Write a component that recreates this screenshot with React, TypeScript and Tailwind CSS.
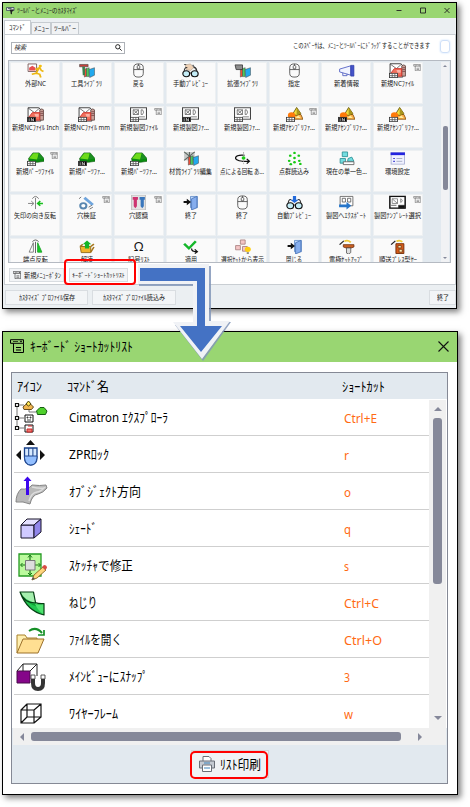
import React, { useLayoutEffect, useRef, useState } from "react";

/* Text condensed or stretched horizontally to a given width. */
function T({ w, children, className = "" }: { w: number; children: string; className?: string }) {
  const ref = useRef<HTMLSpanElement>(null);
  const [s, setS] = useState(1);
  useLayoutEffect(() => {
    if (ref.current && ref.current.offsetWidth) setS(w / ref.current.getBoundingClientRect().width * s);
  }, [w, children]);
  return (
    <span className={"block shrink-0 whitespace-pre " + className} style={{ width: w }}>
      <span ref={ref} className="inline-block origin-left" style={{ transform: `scaleX(${s})` }}>
        {children}
      </span>
    </span>
  );
}

function MenuMark({ className = "" }: { className?: string }) {
  return (
    <svg viewBox="0 0 14 14" className={className} fill="none" stroke="currentColor">
      <path d="M.5.7h13v3.6H.5zM3.5 4.3v9.2h10V4.3M6 8.5h5M6 11h5" />
      <path d="M3 2.5h5" strokeWidth=".7" />
      <path d="M9.5 1.8h3l-1.5 1.7z" fill="currentColor" stroke="none" />
    </svg>
  );
}

const Mouse = () => (
  <g fill="none" stroke="#555" strokeWidth=".9">
    <rect x="3.5" y="1" width="9" height="14" rx="4" />
    <path d="M3.5 7h9M8 1v2M8 6v1" />
    <rect x="6.8" y="2.7" width="2.4" height="3.8" rx="1" />
  </g>
);
const Tag = ({ dark }: { dark?: boolean }) => (
  <g>
    <rect x=".4" y="11" width="7.6" height="4.6" fill={dark ? "#000" : "#fff"} stroke="#333" strokeWidth=".8" />
    {dark ? <path d="M2 12v3M4 15v-3l2 3v-3" stroke="#fff" strokeWidth=".7" fill="none" /> : <path d="M0 13.5h8M3 11v5M5.5 11v5" stroke="#555" strokeWidth=".8" />}
  </g>
);
const Nc = ({ dark }: { dark?: boolean }) => (
  <g>
    <path d="M1 .8h10l2 2V15H1z" fill="#fff" stroke="#333" strokeWidth=".9" />
    <path d="M1 1l6 5 5-5" fill="none" stroke="#555" strokeWidth=".8" />
    <path d="M12 3q2-2 3.5 0v11H12z" fill="#c9a098" stroke="#5c4540" strokeWidth=".8" />
    <path d="M1 12l4-6h7v8H7z" fill="#f0705c" stroke="#d02c26" strokeWidth=".9" />
    <path d="M7 7.500h4v3H8z" fill="#fbb3a6" />
    <path d="M12.5 5h3M12.5 7h3M12.5 9h3" stroke="#744" strokeWidth=".8" />
    <Tag dark={dark} />
  </g>
);
const Drawing = ({ dark }: { dark?: boolean }) => (
  <g>
    <rect x=".5" y=".8" width="15" height="12.2" fill="#fff" stroke="#444" />
    <path d="M3 3h5v5H3zM3 3l5 5M8 3L3 8M10.5 3v5h1.3q2-2.5 0-5zM8 10.5h6" fill="none" stroke="#666" strokeWidth=".8" />
    <Tag dark={dark} />
  </g>
);
const Assembly = ({ dark }: { dark?: boolean }) => (
  <g>
    <path d="M8 13l-1-5h7l2 5z" fill="#ffb04a" stroke="#7d4500" strokeWidth=".8" />
    <path d="M6 8l4-7.5L14 7l-4 2z" fill="#f3dd3a" stroke="#554700" strokeWidth=".8" />
    <path d="M10 .5L14 7l-4 2z" fill="#a9951c" />
    <circle cx="5.2" cy="9" r="3.4" fill="#ff7a0a" />
    <path d="M9 11.5l2.5-2.5 2.500 3z" fill="#fff0a0" />
    <Tag dark={dark} />
  </g>
);
const Part = ({ dark }: { dark?: boolean }) => (
  <g>
    <path d="M1.5 8l4-6h6l4.5 6v3l-6 1H2z" fill="#0a8d10" stroke="#0a5a0c" strokeWidth=".6" />
    <path d="M2 8l4-5.5h5L9.5 9z" fill="#6edb1c" />
    <path d="M11.5 2.5l4 5.500-5.500 1z" fill="#1e8f22" />
    <Tag dark={dark} />
  </g>
);
const Books = () => (
  <g strokeWidth=".5" stroke="#444">
    <path d="M6 7l2-1.5v8.5l-2 1z" fill="#ef4e36" />
    <path d="M8 6l2.5-1v9.5H8z" fill="#4bc95c" />
    <path d="M10.5 7L15.5 5v8l-4.5 2.5z" fill="#22a9ee" />
  </g>
);
const Door = () => (
  <g>
    <path d="M8 1.5h6.5v12H8z" fill="#c4dcff" stroke="#5b86c4" strokeWidth=".8" />
    <path d="M9 4l5-2.5v12L9 16z" fill="#86aeee" stroke="#4671b5" strokeWidth=".8" />
    <path d="M1.5 6.5h3V4L8.5 7.5 4.5 11V8.5h-3z" fill="#111" />
  </g>
);
const Glasses = () => (
  <g>
    <path d="M2 10Q2 4 5 5M14 10q0-6-3-5" fill="none" stroke="#333" />
    <circle cx="4" cy="11.5" r="3.2" fill="#c4edf7" stroke="#111" strokeWidth="1.1" />
    <circle cx="12" cy="11.5" r="3.2" fill="#c4edf7" stroke="#111" strokeWidth="1.1" />
    <path d="M7 11q1-1 2 0" stroke="#111" fill="none" />
  </g>
);

function Icon({ k }: { k: string }) {
  let g: React.ReactNode = null;
  const dark = k.endsWith("!");
  switch (k.replace("!", "")) {
    case "extnc":
      g = <g><path d="M1 1h8v8H1z" fill="#fff" stroke="#644" strokeWidth=".8" /><path d="M2 8V5l3-2 3 2v3z" fill="#e84f4f" /><path d="M8 7l4-2 1.5 3 2 1M11 6l-2.5 5-4 1M9 11l3 1 1 3.5" fill="none" stroke="#edb713" strokeWidth="1.7" /><circle cx="12.5" cy="3.3" r="1.5" fill="#f4bf11" /></g>; break;
    case "lib": g = <g><Books /><path d="M1.5 1.5h8V4h-8z" fill="#c9403a" stroke="#444" strokeWidth=".6" /><path d="M4 4h2.5v9h-2z" fill="#3b7f4b" /></g>; break;
    case "mouse": g = <Mouse />; break;
    case "preview": g = <g><path d="M3 2l5-1 3 4-3 3-4-1z" fill="#eed1b5" stroke="#a98" strokeWidth=".6" /><path d="M2 1.5h2M10 2l4 6" stroke="#555" strokeWidth="1.1" /><Glasses /></g>; break;
    case "extlib": g = <g><Books /><path d="M1 2h7v5H2z" fill="#8d8d8d" stroke="#333" strokeWidth=".8" /></g>; break;
    case "horn": g = <g><path d="M1.5 6.5L12 3v10L1.5 9.5z" fill="#f1f4ff" stroke="#5663c4" strokeWidth=".9" /><path d="M12 2.5h3V14h-3z" fill="#4553c9" stroke="#2735a0" strokeWidth=".6" /><path d="M4.5 10.5v3h4v-2" fill="none" stroke="#5663c4" strokeWidth=".9" /></g>; break;
    case "nc": g = <Nc dark={dark} />; break;
    case "draw": g = <Drawing dark={dark} />; break;
    case "asm": g = <Assembly dark={dark} />; break;
    case "part": g = <Part dark={dark} />; break;
    case "material": g = <g><path d="M2 1h10v9H2z" fill="#c5c9c7" /><path d="M2 1l10 9M12 1L2 10M7 1v9" stroke="#5b655f" /><Books /></g>; break;
    case "rotate": g = <g><path d="M10 4.5C0 3.5-2 10 8 11h6M12 8.5l2.5 2.5-2.5 2.5" fill="none" stroke="#111" strokeWidth="1.2" /><path d="M9 1v13" stroke="#999" strokeDasharray="2 1" strokeWidth=".8" /><circle cx="9" cy="7.5" r="1.8" fill="#1dcc18" /></g>; break;
    case "dots": g = <g fill="#17c914">{[[8, 2], [4, 5], [12, 5], [8, 7.5], [3, 10.5], [12.5, 10.5], [8, 12], [4.5, 14], [13.5, 13.8]].map(([x, y]) => <circle key={`${x}-${y}`} cx={x} cy={y} r="1.25" />)}</g>; break;
    case "color": g = <g fill="#73dde0" stroke="#278b91" strokeWidth=".8"><path d="M4 1h5v5H4zM2 8h5v5H2zM9.5 8L13 6.500l2 4.500H9z" /><path d="M5 11.5h10v3H5z" fill="#fff" stroke="#555" /></g>; break;
    case "settings": g = <g><rect x="2" y="1.5" width="12.5" height="12.5" fill="#f0f2ff" stroke="#a4abd0" strokeWidth=".8" /><path d="M1.5 3H15" stroke="#2424df" strokeWidth="2.8" /><path d="M7 8h5.5M7 11h5.5" stroke="#a1a7c0" strokeWidth=".9" /><path d="M4 8h1.5M4 11h1.5" stroke="#3434cf" strokeWidth="1.3" /></g>; break;
    case "flip": g = <g><path d="M8 3v12M5 4q3-5 6 0M1 9h5M4 6.5L6.5 9 4 11.5" fill="none" stroke="#777" strokeWidth=".9" /><path d="M15 9h-5M12.5 6.5L10 9l2.5 2.5" stroke="#17bf1c" strokeWidth="1.5" fill="none" /></g>; break;
    case "hole": g = <g><path d="M6 3l8 7.5" stroke="#6fa5dd" strokeWidth="2.8" /><circle cx="5" cy="11.5" r="2.9" fill="#fff" stroke="#5a87b0" strokeWidth="1.9" /><path d="M1 4l2-2M10 13l3-2M11 15l3-2" stroke="#555" strokeWidth=".8" /></g>; break;
    case "holerec": g = <g><path d="M1.5 0h13v16h-13z" fill="#e3e3e3" stroke="#b4b4b4" strokeWidth=".8" /><path d="M2.5 2h5v3h-1v7L5 14l-1.5-2V5h-1z" fill="#cd3470" /><path d="M9 2h5v3h-1v7l-1.500 2-1.500-2V5H9z" fill="#3976bc" /></g>; break;
    case "door": g = <Door />; break;
    case "auto": g = <g><Glasses /><path d="M6.5 1h3v4H12L8 8.500 4 5h2.500z" fill="#236bdb" /></g>; break;
    case "export": g = <g><path d="M2 1.5h12v10H2z" fill="#fff" stroke="#555" strokeWidth=".8" /><path d="M4 3.5h3v4H4zM9 3.5h3v4H9z" fill="none" stroke="#555" strokeWidth=".8" /><path d="M1 10h7V7.5l4.5 4-4.5 4V13H1z" fill="#2776ca" /></g>; break;
    case "template": g = <g><rect x=".8" y="1.5" width="14.4" height="12.5" fill="#fff" stroke="#111" strokeWidth="1.4" /><path d="M3 4h5v5H3zM3 4l5 5M11 4v4q3-2 0-4" stroke="#777" fill="none" strokeWidth=".8" /><path d="M9 11h6v3H9zM2 11h5" fill="#111" stroke="#333" strokeWidth=".7" /></g>; break;
    case "mirror": g = <g><path d="M6 4L2 14h4z" fill="#fff" stroke="#777" strokeWidth=".9" /><path d="M10 4v10h4z" fill="#15cc25" stroke="#20a52b" strokeWidth=".9" /><path d="M8 3v12M5 3q3-4 6 0" stroke="#555" fill="none" strokeWidth=".9" /></g>; break;
    case "unzip": g = <g><path d="M2 8h10v6.5H3z" fill="#f2b52a" stroke="#825a08" strokeWidth=".8" /><path d="M2 8l2.5-2.5M12 8l3-2.500M12 14l3-5.500" stroke="#a5761c" strokeWidth="1.5" /><path d="M6.5 10V5.5h-2l4-4 4 4h-2V10z" fill="#15b526" /></g>; break;
    case "apply": g = <g fill="none"><path d="M2 5l4.5 5L13 2.5" stroke="#14b72a" strokeWidth="2.4" /><path d="M9 10q0 3.5 5 3.5M12 11l2.5 2.5-2.5 2" stroke="#111" strokeWidth="1.2" /></g>; break;
    case "set": g = <g><path d="M6 1h4.500v4.500H6zM1.500 7H6v4.500H1.500zM8 8h4.500v5H8z" fill="#f4c6c6" stroke="#a57b7b" strokeWidth=".8" /><circle cx="13" cy="11" r="2.8" fill="#ffcf12" /><path d="M12 14h2v2h-2z" fill="#888" /></g>; break;
    case "electrode": g = <g><path d="M1.5 6l4-4" stroke="#222" strokeWidth="1.2" /><path d="M5 6h10v2.500l-2.500 1h-5L5 8.500z" fill="#c96024" stroke="#713112" strokeWidth=".8" /><path d="M8 9.500h4v5L10 16l-2-1z" fill="#ddd" stroke="#555" strokeWidth=".8" /><path d="M6 2.500q3-2 6 1" fill="none" stroke="#efc935" strokeWidth="1.8" /></g>; break;
    case "press": g = <g><path d="M2 6l4-4" stroke="#222" strokeWidth="1.2" /><path d="M6.500 5H14v10.500H6.500z" fill="#d65b18" stroke="#6f2b08" strokeWidth=".9" /><path d="M8.500 7h3v2.500h-3zM9.500 11h3v3h-3z" fill="#fff0be" stroke="#74320b" strokeWidth=".8" /><path d="M7 2.500q3-2 5.500.5" fill="none" stroke="#eecb35" strokeWidth="1.8" /></g>; break;
  }
  return <svg viewBox="0 0 16 16" className="h-[15px] w-[17px] shrink-0" preserveAspectRatio="none">{g}</svg>;
}

type Cell = [string, string, number, boolean?];
const cells: Cell[] = [
  ["extnc", "外部NC", 21], ["lib", "工具ﾗｲﾌﾞﾗﾘ", 31], ["mouse", "戻る", 11], ["preview", "手動ﾌﾟﾚﾋﾞｭｰ", 35],
  ["extlib", "拡張ﾗｲﾌﾞﾗﾘ", 31], ["mouse", "指定", 12], ["horn", "新着情報", 25], ["nc", "新規NCﾌｧｲﾙ", 33, true],
  ["nc!", "新規NCﾌｧｲﾙ Inch", 47], ["nc", "新規NCﾌｧｲﾙ mm", 46], ["draw", "新規製図ﾌｧｲﾙ", 38, true], ["draw!", "新規製図ﾌｧ...", 36],
  ["draw", "新規製図ﾌｧ...", 36], ["asm", "新規ｱｾﾝﾌﾞﾘﾌｧ...", 42, true], ["asm!", "新規ｱｾﾝﾌﾞﾘﾌｧ...", 42], ["asm", "新規ｱｾﾝﾌﾞﾘﾌｧ...", 42],
  ["part", "新規ﾊﾟｰﾂﾌｧｲﾙ", 38, true], ["part!", "新規ﾊﾟｰﾂﾌｧ...", 36], ["part", "新規ﾊﾟｰﾂﾌｧ...", 36], ["material", "材質ﾗｲﾌﾞﾗﾘ編集", 43],
  ["rotate", "点による回転 あ...", 44], ["dots", "点群読込み", 30], ["color", "現在の単一色...", 41], ["settings", "環境設定", 25],
  ["flip", "矢印の向き反転", 42], ["hole", "穴検証", 19, true], ["holerec", "穴認識", 19, true], ["door", "終了", 12],
  ["mouse", "終了", 12], ["auto", "自動ﾌﾟﾚﾋﾞｭｰ", 34], ["export", "製図へｴｸｽﾎﾟｰﾄ", 40], ["template", "製図ﾃﾝﾌﾟﾚｰﾄ選択", 47, true],
  ["mirror", "端点反転", 25], ["unzip", "解凍", 12], ["omega", "記号ﾘｽﾄ", 22], ["apply", "適用", 12],
  ["set", "選択ｾｯﾄから表示", 43], ["door", "閉じる", 16], ["electrode", "電極ｾｯﾄｱｯﾌﾟ", 34], ["press", "順送ﾌﾟﾚｽ型ｾｰ", 38],
];

function RowIcon({ n }: { n: number }) {
  const art = [
    <g key="0"><path d="M3 5v25M3 5h7M3 18h7M3 28h7M15 9v3h7" fill="none" stroke="#777" /><path d="M1.500 3.500h3v3h-3zM1.500 16.500h3v3h-3zM1.500 26.500h3v3h-3z" fill="#fff" stroke="#111" strokeWidth="1.200" /><path d="M9 7l5.500-5 5 5-2 2.500H10z" fill="#efb54f" stroke="#684b19" /><path d="M12 4l2.500-3L17 4l-2.500 2z" fill="#ffe757" stroke="#4d420a" /><path d="M22.500 11L26 7.500h4l3 3.500-1.500 3.500h-8z" fill="#4fd12c" stroke="#155d12" /><path d="M11 15h8v7h-8zM11 25h8v7h-8z" fill="#fff" stroke="#111" /><path d="M13 17h1v1h-1zM16 17h1v1h-1zM13 20h4" stroke="#444" /><path d="M13 29h5v3h-5zM14 26h4" stroke="#c92626" fill="#ef7770" /></g>,
    <g key="1"><path d="M16.500 3L21 8h-9zM2 18l5-5v10zM31 18l-5-5v10z" fill="#111" /><path d="M10.500 11H23v9q0 8-6.200 8t-6.300-8z" fill="#d8eaff" stroke="#17408a" strokeWidth="1.300" /><path d="M10.500 19H23v2q-1 7-6.200 7t-6.300-7z" fill="#93bfff" stroke="#244b94" /><path d="M14.700 11v8M18.900 11v8" stroke="#17408a" /></g>,
    <g key="2"><path d="M7 15q7 1 11-4 8 1 14 0l1 3q-4 5-9 6-6 1-8 10-7-3-14-2 0-8 5-13z" fill="#b9b9b9" stroke="#858585" /><path d="M18 13q8 2 12 1-4 4-7 4-6 1-8 9" fill="none" stroke="#ddd" strokeWidth="1.500" /><path d="M13.500 21V5" stroke="#3d08ed" strokeWidth="3" /><path d="M13.500 2.500L9.500 7h8z" fill="#3d08ed" /></g>,
    <g key="3" stroke="#171329"><path d="M7 14h13v13H7z" fill="#d0caff" /><path d="M7 14l6-6h14l-7 6z" fill="#e5e1ff" /><path d="M20 14l7-6v13l-7 6z" fill="#9186ea" /></g>,
    <g key="4"><path d="M5 6h22v22H5z" fill="#bbfa9d" stroke="#259a22" strokeWidth="1.300" /><path d="M16 8v19M7 17h19" stroke="#167813" strokeWidth="1.200" /><path d="M14 9.500L16 7l2 2.500M14 25l2 2 2-2M8.500 15l-2 2 2 2M24.500 15l2 2-2 2" stroke="#167813" fill="none" /><path d="M11.500 12.500H21V22h-9.500z" fill="#ddd" stroke="#777" /><path d="M18 32l2-5 9-8 3 3-9 8z" fill="#ffd57c" stroke="#906825" strokeWidth=".9" /><path d="M28 19l2-2q3 0 3 3l-2 2z" fill="#d84d47" /><path d="M17.500 32l1.500-3 2 2z" fill="#555" /></g>,
    <g key="5" strokeLinejoin="round"><path d="M6 7h13.500l2 11q3 1.500 8.500.5V30Q13 26 6 7z" fill="#22c850" /><path d="M6 7h13.500l2 11Q10 15 6 7z" fill="#a5efae" /><path d="M9 12q5 7 12.500 7 5 .5 8.500-.5v4Q18 23 9 12z" fill="#0da534" /><path d="M21 19q4 1 9-.5v11Q24 26 21 19z" fill="#4fe36f" /><path d="M6 7h13.500l2 10.500q3 1.500 8.500 1V30Q13 26 6 7zM6 7q4 11 15.500 11" fill="none" stroke="#063f14" strokeWidth="1.200" /></g>,
    <g key="6"><path d="M3 31V13h8l2 3h10v6" fill="#ffefb0" stroke="#a8812a" /><path d="M3 31l6-14h21l-6 14z" fill="#ffdf92" stroke="#9b702b" /><path d="M15 9q7-5 13 2" fill="none" stroke="#169027" strokeWidth="2" /><path d="M24 13h6V8" fill="none" stroke="#169027" strokeWidth="1.700" /></g>,
    <g key="7"><path d="M3 12h13v12H3z" fill="#850689" stroke="#490b4a" /><path d="M3 12l6-7h14v12M16 12l7-7M9 5v7" fill="none" stroke="#222" /><path d="M17 16h4v8q0 4 3 4t3-4v-8h4v8q0 8-7 8t-7-8z" fill="#343434" /><path d="M17 16h4v4h-4zM27 16h4v4h-4z" fill="#fff" stroke="#333" strokeWidth=".8" /></g>,
    <g key="8" stroke="#111" fill="none" strokeWidth="1.200"><path d="M7 14h13v13H7zM13 8h14v13H13zM7 14l6-6M20 14l7-6M20 27l7-6M7 27l6-6" /></g>,
  ][n];
  return <svg viewBox="0 0 34 34" className="h-[34px] w-[34px] shrink-0">{art}</svg>;
}

const rows: [string, number, string, number][] = [
  ["Cimatron ｴｸｽﾌﾟﾛｰﾗ", 99, "Ctrl+E", 33], ["ZPRﾛｯｸ", 40, "r", 5], ["ｵﾌﾞｼﾞｪｸﾄ方向", 72, "o", 7],
  ["ｼｪｰﾄﾞ", 28, "q", 7], ["ｽｹｯﾁｬで修正", 64, "s", 5], ["ねじり", 28, "Ctrl+C", 35],
  ["ﾌｧｲﾙを開く", 53, "Ctrl+O", 38], ["ﾒｲﾝﾋﾞｭｰにｽﾅｯﾌﾟ", 79, "3", 6], ["ﾜｲﾔｰﾌﾚｰﾑ", 49, "w", 9],
];

const smallBtn = "flex shrink-0 items-center justify-center border border-[#d9dde1] bg-[#f3f5f7]";
const shadow = "shadow-[3px_3px_6px_rgba(0,0,0,0.5)]";

export default function App() {
  return (
    <div lang="ja" className="relative flex h-[807px] w-[470px] flex-col overflow-hidden bg-white pl-[2px] pt-[2px] font-['Noto_Sans','Noto_Sans_CJK_JP',sans-serif] text-[#202020]">
      {/* Customize window */}
      <section className={"flex h-[307px] w-[455px] shrink-0 flex-col border border-black bg-[#ebeff2] text-[7px] leading-[9px] " + shadow}>
        <header className="flex h-[15px] shrink-0 items-center bg-[#99d672] pl-[3px]">
          <svg viewBox="0 0 18 16" className="mr-[2px] h-[8px] w-[9px]"><path d="M1 1h15v6H1zM4 3h7" fill="#ddd" stroke="#345" strokeWidth="1.500" /><path d="M7 5h9l-4 5v5L9 13v-3z" fill="#222" /></svg>
          <T w={61}>ﾂｰﾙﾊﾞｰとﾒﾆｭｰのｶｽﾀﾏｲｽﾞ</T>
          <svg viewBox="0 0 54 7" className="ml-auto mr-[6px] h-[7px] w-[54px]" fill="none" stroke="#222" strokeWidth=".9"><path d="M.5 3.500h5M24.500 1h5v5h-5zM48.500 1l5 5M53.500 1l-5 5" /></svg>
        </header>
        <nav className="flex h-[16px] shrink-0 items-end pl-[1px]">
          <div className="flex h-[14px] w-[27px] items-center justify-center border border-b-0 border-[#c6cbd0] bg-white"><T w={17}>ｺﾏﾝﾄﾞ</T></div>
          <div className="flex h-[12px] w-[20px] items-center justify-center border border-b-0 border-[#c6cbd0] bg-[#f0f2f4]"><T w={15}>ﾒﾆｭｰ</T></div>
          <div className="flex h-[12px] w-[28px] items-center justify-center border border-b-0 border-[#c6cbd0] bg-[#f0f2f4]"><T w={22}>ﾂｰﾙﾊﾞｰ</T></div>
        </nav>
        <main className="ml-[1px] flex h-[251px] shrink-0 flex-col border border-[#c9ced3] bg-white">
          <div className="flex h-[25px] shrink-0 items-center pl-[6px]">
            <div className="flex h-[12px] w-[114px] items-center justify-between border border-[#aeb2b8] px-[2px]">
              <T w={12} className="italic">検索</T>
              <svg viewBox="0 0 10 10" className="h-[7px] w-[7px]" fill="none" stroke="#222" strokeWidth="1.400"><circle cx="4" cy="4" r="3.100" /><path d="M6.300 6.300l3.200 3.200" /></svg>
            </div>
            <div className="-mt-[5px] ml-[168px]"><T w={137}>このｽﾍﾟｰｻは、ﾒﾆｭｰとﾂｰﾙﾊﾞｰにﾄﾞﾗｯｸﾞすることができます</T></div>
            <div className="-mt-[2px] ml-[10px] h-[13px] w-[10px] rounded-[3px] border border-[#cfe0f8] shadow-[0_0_2px_#c3dcff]" />
          </div>
          <div className="ml-[3px] flex h-[203px] w-[443px] shrink-0 justify-between border border-[#b5bac2] bg-[#e2e9ef] pl-[1px] pt-[1px]">
            <div className="grid h-[200px] auto-rows-[42px] grid-cols-[repeat(8,50px)] gap-x-[1.85px] gap-y-[2px] overflow-hidden">
              {cells.map(([k, label, w, menu], i) => (
                <div key={i} className="relative flex flex-col items-center border border-[#edf0f2] bg-[#fafafa]">
                  {k === "omega" ? <span className="h-[15px] text-[13px] leading-[15px] text-[#111]">Ω</span> : <Icon k={k} />}
                  <T w={w} className="mt-px h-[9px] leading-[9px]">{label}</T>
                  {menu && <MenuMark className="absolute right-px top-px h-[7px] w-[8px] text-[#444]" />}
                </div>
              ))}
            </div>
            <div className="mr-[1px] flex h-[200px] w-[8px] flex-col items-center bg-[#f1f2f4] pt-[3px]">
              <div className="border-x-[2px] border-b-[2px] border-x-transparent border-b-[#85899a]" />
              <div className="mt-[59px] h-[64px] w-[5px] rounded-[2px] bg-[#858899]" />
              <div className="mt-auto mb-[3px] border-x-[2px] border-t-[2px] border-x-transparent border-t-[#85899a]" />
            </div>
          </div>
          <div className="flex items-center pl-[4px] pt-[5px]">
            <div className={smallBtn + " h-[14px] w-[55px] gap-[3px]"}><MenuMark className="h-[8px] w-[8px]" /><T w={37}>新規ﾒﾆｭｰﾎﾞﾀﾝ</T></div>
            <div className={smallBtn + " ml-[5px] h-[14px] w-[59px]"}><T w={53} className="text-[6px]">ｷｰﾎﾞｰﾄﾞｼｮｰﾄｶｯﾄﾘｽﾄ</T></div>
          </div>
        </main>
        <footer className="flex items-center pl-[2px] pt-[5px]">
          <div className={smallBtn + " h-[15px] w-[83px]"}><T w={56}>ｶｽﾀﾏｲｽﾞ ﾌﾟﾛﾌｧｲﾙ保存</T></div>
          <div className={smallBtn + " ml-[4px] h-[15px] w-[84px]"}><T w={62}>ｶｽﾀﾏｲｽﾞ ﾌﾟﾛﾌｧｲﾙ読込み</T></div>
          <div className={smallBtn + " ml-auto h-[15px] w-[27px]"}><T w={12}>終了</T></div>
        </footer>
      </section>

      {/* Shortcut list window */}
      <section className={"mt-[22px] flex h-[464px] w-[456px] shrink-0 flex-col border border-black bg-white text-[13px] leading-[18px] text-black " + shadow}>
        <header className="flex h-[30px] shrink-0 items-center bg-[#99d672] pl-[7px] pr-[8px]">
          <MenuMark className="-mt-[2px] mr-[6px] h-[14px] w-[14px]" />
          <T w={103} className="-mt-[2px]">ｷｰﾎﾞｰﾄﾞ ｼｮｰﾄｶｯﾄﾘｽﾄ</T>
          <svg viewBox="0 0 11 11" className="-mt-[2px] ml-auto h-[11px] w-[11px]" stroke="#111" strokeWidth="1.100"><path d="M.5.5l10 10M10.500.5l-10 10" /></svg>
        </header>
        <div className="ml-[8px] mt-[10px] flex h-[412px] w-[437px] flex-col border border-[#858995] bg-[#e2e9ef]">
          <div className="flex h-[26px] shrink-0 items-center pl-[5px]">
            <T w={25}>ｱｲｺﾝ</T>
            <T w={42} className="ml-[25px]">ｺﾏﾝﾄﾞ名</T>
            <T w={43} className="ml-[233px]">ｼｮｰﾄｶｯﾄ</T>
          </div>
          <div className="flex h-[329px] shrink-0 bg-white">
            <div className="h-[329px] w-[417px] overflow-hidden pl-[2px]">
              {rows.map(([name, w, key, kw], i) => (
                <div key={name} className="flex h-[37px] items-center border-b border-[#cfcfcf]">
                  <RowIcon n={i} />
                  <T w={w} className="ml-[21px]">{name}</T>
                  <div className="ml-auto w-[85px] pt-[1px] text-[#ff6a13]"><T w={kw}>{key}</T></div>
                </div>
              ))}
            </div>
            <div className="mt-[1px] flex h-[328px] w-[17px] flex-col items-center bg-[#f0f0f0] pt-[7px]">
              <div className="border-x-[4px] border-b-[4px] border-x-transparent border-b-[#85889a]" />
              <div className="mt-[7px] h-[166px] w-[9px] rounded-[3px] bg-[#858899]" />
              <div className="mb-[8px] mt-auto border-x-[4px] border-t-[4px] border-x-transparent border-t-[#85889a]" />
            </div>
          </div>
          <div className="mx-[1px] flex h-[17px] shrink-0 items-center bg-[#f0f0f0] pl-[7px]">
            <div className="border-y-[4px] border-r-[4px] border-y-transparent border-r-[#85889a]" />
            <div className="ml-[7px] h-[9px] w-[370px] rounded-[3px] bg-[#858899]" />
            <div className="ml-[17px] border-y-[4px] border-l-[4px] border-y-transparent border-l-[#85889a]" />
          </div>
          <div className="flex justify-center pt-[5px]">
            <div className="flex h-[28px] w-[78px] items-center gap-[5px] border border-[#d2d6db] bg-[#f0f2f5] pl-[7px]">
              <svg viewBox="0 0 16 16" className="h-[16px] w-[16px]" fill="#fff" stroke="#6a6f78"><path d="M4 5V.5h6l2 2V5" /><path d="M.5 5h15v7H.5z" fill="#c5cad2" /><path d="M3.500 9h9v6.500h-9z" /><path d="M5 7h6M5 12h6" stroke="#3e83ba" /></svg>
              <T w={41} className="-mt-px">ﾘｽﾄ印刷</T>
            </div>
          </div>
        </div>
      </section>

      {/* Callouts and arrow drawn over the windows */}
      <div className="absolute left-[64px] top-[259px] h-[26px] w-[72px] rounded-[4px] border-2 border-[#f00]" />
      <div className="absolute left-[190px] top-[751px] h-[28px] w-[78px] rounded-[5px] border-2 border-[#f00]" />
      <svg viewBox="0 0 100 104" className="absolute left-[136px] top-[261px] h-[104px] w-[100px]">
        <path d="M3 5h72v56h20L67 100 39 64h19V25H3z" fill="#8296b8" opacity=".85" />
        <path d="M2 3h71v57h21L66 98 37 61h20V23H2z" fill="#f0f2f6" />
        <path d="M4 7h65v58h17L65 91 44 65h17V20H4z" fill="#4472c4" />
      </svg>
    </div>
  );
}
